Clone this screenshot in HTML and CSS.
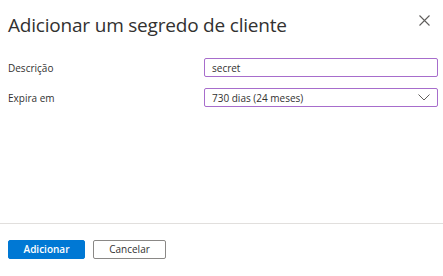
FILE: index.html
```html
<!DOCTYPE html>
<html lang="pt">
<head>
<meta charset="utf-8">
<link rel="stylesheet" href="styles.css">
</head>
<body>
<div class="panel">
  <div class="content">
    <div class="header">
      <h1 class="title">Adicionar um segredo de cliente</h1>
      <button class="close" aria-label="Fechar">
        <svg width="11" height="11" viewBox="0 0 11 11"><path d="M0.5 0.5L10.5 10.5M10.5 0.5L0.5 10.5" stroke="#605e5c" stroke-width="1.1" fill="none"/></svg>
      </button>
    </div>
    <div class="form">
      <label class="label">Descrição</label>
      <div class="field"><span class="value">secret</span></div>
      <label class="label">Expira em</label>
      <div class="field select"><span class="value">730 dias (24 meses)</span>
        <svg class="chev" width="12" height="7" viewBox="0 0 12 7"><path d="M0.5 0.5L6 6L11.5 0.5" stroke="#605e5c" stroke-width="1" fill="none"/></svg>
      </div>
    </div>
  </div>
  <div class="footer">
    <button class="btn primary">Adicionar</button>
    <button class="btn secondary">Cancelar</button>
  </div>
</div>
</body>
</html>
```
FILE: styles.css
```css
html, body {
  margin: 0;
  padding: 0;
  background: #fff;
}
body {
  font-family: "Segoe UI", "Open Sans", "Noto Sans", sans-serif;
  color: #323130;
}
.panel {
  height: 100vh;
  display: flex;
  flex-direction: column;
}
.content {
  flex: 1;
  padding: 0 5px 0 8px;
}
.header {
  display: flex;
  align-items: center;
  justify-content: space-between;
  height: 45px;
  padding-top: 5px;
  box-sizing: border-box;
}
.title {
  margin: 0;
  font-size: 19px;
  font-weight: 400;
  letter-spacing: -0.2px;
  color: #323130;
  line-height: 24px;
}
.close {
  border: 0;
  background: none;
  padding: 0;
  width: 24px;
  height: 24px;
  display: flex;
  align-items: center;
  justify-content: center;
  margin-right: 2px;
  margin-top: -10px;
}
.form {
  display: grid;
  grid-template-columns: 196px 1fr;
  row-gap: 11px;
  align-items: center;
  margin-top: 13px;
}
.label {
  font-size: 10px;
  line-height: 14px;
}
.field {
  height: 19px;
  box-sizing: border-box;
  border: 1px solid #a76dcc;
  border-radius: 2px;
  display: flex;
  align-items: center;
  justify-content: space-between;
  padding: 0 7px 0 7px;
  font-size: 10px;
}
.field .value {
  line-height: 14px;
}
.footer {
  border-top: 1px solid #e1dfdd;
  padding: 16px 8px 17px;
  display: flex;
  gap: 8px;
}
.btn {
  height: 19px;
  box-sizing: border-box;
  font-family: inherit;
  font-size: 10px;
  border-radius: 2px;
  padding: 0;
  line-height: 15px;
}
.primary {
  width: 77px;
  background: #0078d4;
  border: 1px solid #0078d4;
  color: #fff;
  font-weight: 600;
}
.secondary {
  width: 73px;
  background: #fff;
  border: 1px solid #8a8886;
  color: #323130;
}
```
